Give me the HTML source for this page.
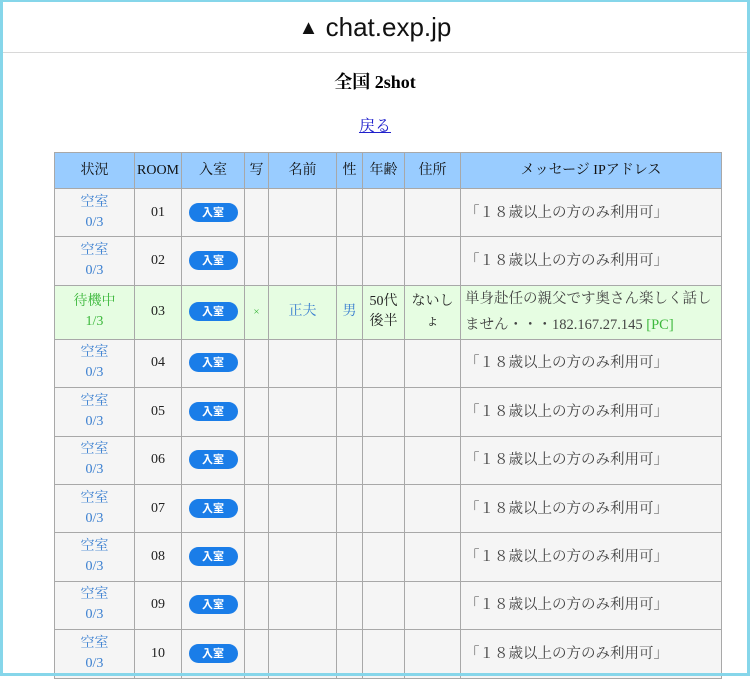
<!DOCTYPE html>
<html><head><meta charset="utf-8"><style>
*{margin:0;padding:0;box-sizing:border-box}
html,body{width:750px;height:676px;overflow:hidden;background:#fff}
.frame{position:absolute;left:0;top:0;width:750px;height:676px;border:3px solid #86d6ea;border-top-width:2px;pointer-events:none;z-index:5}
.hdr{position:absolute;left:0;top:0;width:750px;height:53px;border-bottom:1px solid #d8d8d8;text-align:center;font:26px/54px "Liberation Sans","DejaVu Sans",sans-serif;color:#111}
.hdr span{font-size:20px;vertical-align:2px}
h1{position:absolute;top:68px;left:0;width:750px;text-align:center;font:bold 18px "Liberation Serif","Noto Serif CJK SC",serif;color:#000}
.back{position:absolute;top:113px;left:0;width:750px;text-align:center;font:16px "Liberation Serif","Noto Serif CJK SC",serif}
.back a{color:#2020cc;text-decoration:underline}
table{position:absolute;left:54px;top:152px;width:668px;border-collapse:collapse;table-layout:fixed;font:14px/20px "Liberation Serif","Noto Serif CJK SC",serif;color:#222}
td,th{border:1px solid #a8a8a8;text-align:center;vertical-align:middle;padding:0 2px;font-weight:normal}
th{background:#99ccff;height:36px;color:#111}
tr.e td{background:#f5f5f5;height:48.4px}
tr.g td{background:#e6fde2;height:54px}
.st{color:#3a7fd0}
.gs{color:#3cb83c}
.b{display:inline-block;width:49px;height:19px;border-radius:10px;background:#1a7de8;color:#fff;font:bold 11px/19px "Noto Sans CJK JP",sans-serif}
td.m{text-align:left;padding-left:4px;color:#444;font-size:14.5px;white-space:nowrap}
</style></head><body>
<div class="frame"></div>
<div class="hdr"><span>▲</span> chat.exp.jp</div>
<h1>全国 2shot</h1>
<div class="back"><a>戻る</a></div>
<table>
<colgroup><col style="width:80px"><col style="width:47px"><col style="width:63px"><col style="width:24px"><col style="width:68px"><col style="width:26px"><col style="width:42px"><col style="width:56px"><col></colgroup>
<tr><th>状況</th><th>ROOM</th><th>入室</th><th>写</th><th>名前</th><th>性</th><th>年齢</th><th>住所</th><th>メッセージ IPアドレス</th></tr>
<tr class="e"><td class="st">空室<br>0/3</td><td>01</td><td><span class="b">入室</span></td><td></td><td></td><td></td><td></td><td></td><td class="m">「１８歳以上の方のみ利用可」</td></tr>
<tr class="e"><td class="st">空室<br>0/3</td><td>02</td><td><span class="b">入室</span></td><td></td><td></td><td></td><td></td><td></td><td class="m">「１８歳以上の方のみ利用可」</td></tr>
<tr class="g"><td class="gs">待機中<br>1/3</td><td>03</td><td><span class="b">入室</span></td><td class="gs" style="font-size:11px">×</td><td class="st">正夫</td><td class="st">男</td><td>50代<br>後半</td><td>ないし<br>ょ</td><td class="m" style="line-height:26px;font-size:14.5px">単身赴任の親父です奥さん楽しく話し<br>ません・・・182.167.27.145 <span class="gs">[PC]</span></td></tr>
<tr class="e"><td class="st">空室<br>0/3</td><td>04</td><td><span class="b">入室</span></td><td></td><td></td><td></td><td></td><td></td><td class="m">「１８歳以上の方のみ利用可」</td></tr>
<tr class="e"><td class="st">空室<br>0/3</td><td>05</td><td><span class="b">入室</span></td><td></td><td></td><td></td><td></td><td></td><td class="m">「１８歳以上の方のみ利用可」</td></tr>
<tr class="e"><td class="st">空室<br>0/3</td><td>06</td><td><span class="b">入室</span></td><td></td><td></td><td></td><td></td><td></td><td class="m">「１８歳以上の方のみ利用可」</td></tr>
<tr class="e"><td class="st">空室<br>0/3</td><td>07</td><td><span class="b">入室</span></td><td></td><td></td><td></td><td></td><td></td><td class="m">「１８歳以上の方のみ利用可」</td></tr>
<tr class="e"><td class="st">空室<br>0/3</td><td>08</td><td><span class="b">入室</span></td><td></td><td></td><td></td><td></td><td></td><td class="m">「１８歳以上の方のみ利用可」</td></tr>
<tr class="e"><td class="st">空室<br>0/3</td><td>09</td><td><span class="b">入室</span></td><td></td><td></td><td></td><td></td><td></td><td class="m">「１８歳以上の方のみ利用可」</td></tr>
<tr class="e"><td class="st">空室<br>0/3</td><td>10</td><td><span class="b">入室</span></td><td></td><td></td><td></td><td></td><td></td><td class="m">「１８歳以上の方のみ利用可」</td></tr>
</table>
</body></html>
